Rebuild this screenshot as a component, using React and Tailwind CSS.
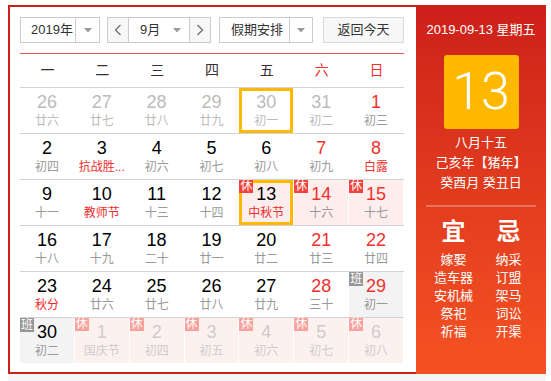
import React from "react";

const Tri = () => (
  <svg width="8" height="5" viewBox="0 0 8 5" className="block">
    <path d="M0 0 L8 0 L4 4.5 Z" fill="#9a9a9a" />
  </svg>
);

const ChevL = () => (
  <svg width="8" height="12" viewBox="0 0 8 12" className="block">
    <polyline points="6.5,1 1.5,6 6.5,11" fill="none" stroke="#707070" strokeWidth="1.3" />
  </svg>
);
const ChevR = () => (
  <svg width="8" height="12" viewBox="0 0 8 12" className="block">
    <polyline points="1.5,1 6.5,6 1.5,11" fill="none" stroke="#707070" strokeWidth="1.3" />
  </svg>
);

const N = "text-[#000]";
const R = "text-[#f2302e]";
const G = "text-[#bbbbbb]";
const F = "text-[#cccccc]";
const LN = "text-[#999]";
const LR = "text-[#ee2e2c]";
const LG = "text-[#bbbbbb]";
const LF = "text-[#cccccc]";
const PINK = "bg-[#fdeeed]";
const PINKF = "bg-[#fdf1f0]";
const GREY = "bg-[#f3f3f3]";

const rows = [
  [
    { n: 26, l: "廿六", nc: G, lc: LG },
    { n: 27, l: "廿七", nc: G, lc: LG },
    { n: 28, l: "廿八", nc: G, lc: LG },
    { n: 29, l: "廿九", nc: G, lc: LG },
    { n: 30, l: "初一", nc: G, lc: LG, sel: true },
    { n: 31, l: "初二", nc: G, lc: LG },
    { n: 1, l: "初三", nc: R, lc: LN },
  ],
  [
    { n: 2, l: "初四", nc: N, lc: LN },
    { n: 3, l: "抗战胜...", nc: N, lc: LR },
    { n: 4, l: "初六", nc: N, lc: LN },
    { n: 5, l: "初七", nc: N, lc: LN },
    { n: 6, l: "初八", nc: N, lc: LN },
    { n: 7, l: "初九", nc: R, lc: LN },
    { n: 8, l: "白露", nc: R, lc: LR },
  ],
  [
    { n: 9, l: "十一", nc: N, lc: LN },
    { n: 10, l: "教师节", nc: N, lc: LR },
    { n: 11, l: "十三", nc: N, lc: LN },
    { n: 12, l: "十四", nc: N, lc: LN },
    { n: 13, l: "中秋节", nc: N, lc: LR, bg: PINK, badge: "rest", sel: true },
    { n: 14, l: "十六", nc: R, lc: LN, bg: PINK, badge: "rest" },
    { n: 15, l: "十七", nc: R, lc: LN, bg: PINK, badge: "rest" },
  ],
  [
    { n: 16, l: "十八", nc: N, lc: LN },
    { n: 17, l: "十九", nc: N, lc: LN },
    { n: 18, l: "二十", nc: N, lc: LN },
    { n: 19, l: "廿一", nc: N, lc: LN },
    { n: 20, l: "廿二", nc: N, lc: LN },
    { n: 21, l: "廿三", nc: R, lc: LN },
    { n: 22, l: "廿四", nc: R, lc: LN },
  ],
  [
    { n: 23, l: "秋分", nc: N, lc: LR },
    { n: 24, l: "廿六", nc: N, lc: LN },
    { n: 25, l: "廿七", nc: N, lc: LN },
    { n: 26, l: "廿八", nc: N, lc: LN },
    { n: 27, l: "廿九", nc: N, lc: LN },
    { n: 28, l: "三十", nc: R, lc: LN },
    { n: 29, l: "初一", nc: R, lc: LN, bg: GREY, badge: "work" },
  ],
  [
    { n: 30, l: "初二", nc: N, lc: LN, bg: GREY, badge: "work" },
    { n: 1, l: "国庆节", nc: F, lc: LF, bg: PINKF, badge: "restf" },
    { n: 2, l: "初四", nc: F, lc: LF, bg: PINKF, badge: "restf" },
    { n: 3, l: "初五", nc: F, lc: LF, bg: PINKF, badge: "restf" },
    { n: 4, l: "初六", nc: F, lc: LF, bg: PINKF, badge: "restf" },
    { n: 5, l: "初七", nc: F, lc: LF, bg: PINKF, badge: "restf" },
    { n: 6, l: "初八", nc: F, lc: LF, bg: PINKF, badge: "restf" },
  ],
];

function Badge({ kind }) {
  if (kind === "rest")
    return (
      <span className="absolute left-0 top-0 w-[14px] h-[13px] bg-[#f5423c] text-white text-[12px] leading-[13px] text-center">
        休
      </span>
    );
  if (kind === "restf")
    return (
      <span className="absolute left-0 top-0 w-[14px] h-[13px] bg-[#f9a19c] text-white text-[12px] leading-[13px] text-center">
        休
      </span>
    );
  return (
    <span className="absolute left-0 top-0 w-[14px] h-[14px] bg-[#969696] text-white text-[12px] leading-[14px] text-center">
      班
    </span>
  );
}

function Cell({ d }) {
  return (
    <div className="h-[45px] pr-px">
      <div className={`relative h-full flex flex-col items-center pt-[4px] ${d.bg || ""}`}>
        {d.sel && <div className="absolute inset-0 border-[3px] border-[#ffb900]" />}
        {d.badge && <Badge kind={d.badge} />}
        <div className={`relative text-[18px] leading-[20px] ${d.nc}`}>{d.n}</div>
        <div className={`relative mt-px text-[12px] leading-[16px] whitespace-nowrap ${d.lc}`}>{d.l}</div>
      </div>
    </div>
  );
}

const weekdays = ["一", "二", "三", "四", "五", "六", "日"];

export default function App() {
  return (
    <div
      className="w-[551px] h-[381px] bg-white pt-[5px] pl-[8px] overflow-hidden"
      style={{ fontFamily: '"Liberation Sans", "Noto Sans CJK SC", sans-serif' }}
    >
      <div className="flex w-[538px] h-[369px]">
        <div className="w-[408px] h-full border-2 border-r-0 border-[#cd1f1a] pl-[10px] pr-[12px] pt-[10px] pb-[9px] bg-white">
          <div className="flex h-[26px] text-[13px] text-[#333]">
            <div className="flex w-[80px] border border-[#cccccc] bg-white">
              <div className="flex-1 flex items-center pl-[10px]">2019年</div>
              <div className="w-[24px] border-l border-[#cccccc] flex items-center justify-center">
                <Tri />
              </div>
            </div>
            <div className="ml-[7px] flex w-[104px] border border-[#cccccc] bg-white">
              <div className="w-[21px] bg-[#f7f7f7] border-r border-[#cccccc] flex items-center justify-center">
                <ChevL />
              </div>
              <div className="flex-1 flex items-center pl-[11px] pr-[8px]">
                <span>9月</span>
                <span className="ml-auto">
                  <Tri />
                </span>
              </div>
              <div className="w-[21px] bg-[#f7f7f7] border-l border-[#cccccc] flex items-center justify-center">
                <ChevR />
              </div>
            </div>
            <div className="ml-[8px] flex w-[94px] border border-[#cccccc] bg-white">
              <div className="flex-1 flex items-center pl-[11px]">假期安排</div>
              <div className="w-[23px] border-l border-[#cccccc] flex items-center justify-center">
                <Tri />
              </div>
            </div>
            <div className="ml-[10px] w-[81px] border border-[#d9d9d9] bg-[#f7f7f7] flex items-center justify-center">
              返回今天
            </div>
          </div>
          <div className="mt-[10px] h-px bg-[#e4534c]" />
          <div className="grid grid-cols-7 h-[33px] items-center text-[14px] text-center text-[#333]">
            {weekdays.map((w, i) => (
              <div key={w} className={i >= 5 ? "text-[#f2302e]" : ""}>
                {w}
              </div>
            ))}
          </div>
          {rows.map((row, ri) => (
            <div key={ri} className="grid grid-cols-7 border-t border-[#d2d2d2]">
              {row.map((d, ci) => (
                <Cell key={ci} d={d} />
              ))}
            </div>
          ))}
        </div>
        <div className="w-[130px] h-full bg-linear-to-b from-[#cd1f1a] to-[#f55223] flex flex-col items-center text-white">
          <div className="mt-[16px] text-[13px] leading-[18px] whitespace-nowrap">2019-09-13 星期五</div>
          <div
            className="mt-[16px] w-[75px] h-[74px] rounded-[3px] bg-[#ffb800] flex items-center justify-center text-[52px] font-light leading-none"
            style={{ fontFamily: "Roboto, sans-serif" }}
          >
            13
          </div>
          <div className="mt-[4px] text-[13px] leading-[20px] text-center whitespace-nowrap">
            <div>八月十五</div>
            <div>己亥年【猪年】</div>
            <div>癸酉月 癸丑日</div>
          </div>
          <div className="mt-[12px] w-[110px] h-[2px] bg-[#f08a78]/70" />
          <div className="mt-[10px] flex">
            <div className="w-[55px] flex flex-col items-center">
              <div className="text-[24px] font-bold leading-[30px]">宜</div>
              <div className="mt-[4px] text-[13px] leading-[18px] text-center whitespace-nowrap">
                <div>嫁娶</div>
                <div>造车器</div>
                <div>安机械</div>
                <div>祭祀</div>
                <div>祈福</div>
              </div>
            </div>
            <div className="w-[55px] flex flex-col items-center">
              <div className="text-[24px] font-bold leading-[30px]">忌</div>
              <div className="mt-[4px] text-[13px] leading-[18px] text-center whitespace-nowrap">
                <div>纳采</div>
                <div>订盟</div>
                <div>架马</div>
                <div>词讼</div>
                <div>开渠</div>
              </div>
            </div>
          </div>
        </div>
      </div>
      <div className="w-[538px] h-[7px] bg-[#f5f5f5]" />
    </div>
  );
}
